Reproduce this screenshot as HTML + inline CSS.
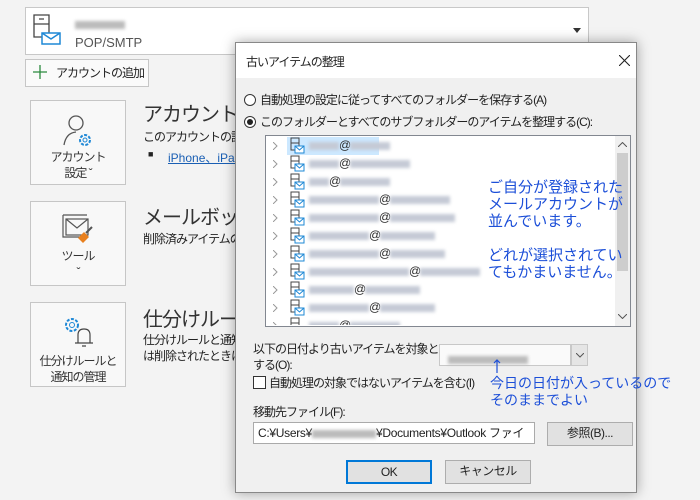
<!DOCTYPE html>
<html><head><meta charset="utf-8"><style>
*{margin:0;padding:0;box-sizing:border-box}
body{width:700px;height:500px;background:#f3f3f3;font-family:"Liberation Sans","Noto Sans CJK JP",sans-serif;position:relative;overflow:hidden;color:#222}
.a{position:absolute;white-space:nowrap}
.tile{position:absolute;left:30px;width:96px;height:85px;border:1px solid #c6c6c6;background:#f8f8f8;text-align:center;font-size:12px;line-height:16px;color:#333;letter-spacing:-1px}
.blur{display:inline-block;height:8px;background:#c5cad6;filter:blur(1.5px);vertical-align:middle}
.dlg{position:absolute;left:235px;top:42px;width:402px;height:451px;background:#f0f0f0;border:1px solid #888;box-shadow:0 0 12px rgba(0,0,0,.35)}
.dlg .a{letter-spacing:-1px}
.rad{position:absolute;width:12px;height:12px;border:1px solid #333;border-radius:50%;background:#fff}
.btn{position:absolute;border:1px solid #adadad;background:#e1e1e1;font-size:12px;text-align:center;line-height:21px;letter-spacing:-0.5px}
.blue{color:#1c4fd8;font-size:14px;line-height:17px}
.dlg .blue{letter-spacing:0}
.row{position:absolute;left:8px;height:18px;font-size:12px}
.sm{letter-spacing:-1px}
</style></head><body>
<div class="a" style="left:25px;top:7px;width:564px;height:48px;background:#fff;border:1px solid #c8c8c8"></div>
<svg class="a" style="left:33px;top:14px" width="30" height="32"><path d="M1 1h15v22H1zM1 10h15M6 5h5" fill="none" stroke="#444" stroke-width="1.3"/><rect x="9" y="19" width="18" height="11" fill="#fff" stroke="#1e88d6" stroke-width="1.5"/><path d="M9 19l9 6 9-6" fill="none" stroke="#1e88d6" stroke-width="1.5"/></svg>
<div class="a" style="left:75px;top:16px"><span class="blur" style="width:50px;background:#bbb"></span></div>
<div class="a" style="left:75px;top:35px;font-size:13px;color:#555">POP/SMTP</div>
<svg class="a" style="left:573px;top:28px" width="8" height="5"><path d="M0 0h8L4 5z" fill="#333"/></svg>
<div class="a sm" style="left:25px;top:59px;width:124px;height:28px;border:1px solid #c6c6c6;background:#fafafa;font-size:12px;line-height:26px;padding-left:30px">アカウントの追加</div>
<svg class="a" style="left:33px;top:65px" width="14" height="14"><path d="M7 0v14M0 7h14" stroke="#2b8a3e" stroke-width="1.3"/></svg>
<div class="tile" style="top:100px"><svg width="40" height="40" style="margin-top:10px"><circle cx="18" cy="12" r="7" fill="none" stroke="#555" stroke-width="1.3"/><path d="M6 34q2-12 12-13" fill="none" stroke="#555" stroke-width="1.3"/><circle cx="27" cy="29" r="5" fill="none" stroke="#1e88d6" stroke-width="2" stroke-dasharray="3 1.5"/><circle cx="27" cy="29" r="2" fill="none" stroke="#1e88d6"/></svg><div style="margin-top:-6px">アカウント<br>設定 ˇ</div></div>
<div class="tile" style="top:201px"><svg width="40" height="36" style="margin-top:10px"><path d="M5 3h24M5 3v22h20" fill="none" stroke="#555" stroke-width="1.2"/><rect x="8" y="7" width="22" height="16" fill="none" stroke="#555" stroke-width="1.2"/><path d="M8 7l11 9 11-9" fill="none" stroke="#555" stroke-width="1.2"/><path d="M20 26l6-6 5 5-6 6z" fill="#e8801e"/><path d="M28 21l6-6" stroke="#555" stroke-width="2"/></svg><div style="margin-top:-4px">ツール<br>ˇ</div></div>
<div class="tile" style="top:302px"><svg width="40" height="38" style="margin-top:10px"><circle cx="14" cy="12" r="6" fill="none" stroke="#1e88d6" stroke-width="2" stroke-dasharray="3 1.5"/><circle cx="14" cy="12" r="2.5" fill="none" stroke="#1e88d6"/><path d="M20 30v-8q0-6 6-6t6 6v8h3H17M24 33h4" fill="none" stroke="#444" stroke-width="1.2"/></svg><div style="margin-top:-2px">仕分けルールと<br>通知の管理</div></div>
<div class="a" style="left:143px;top:98px;font-size:20px;color:#333;letter-spacing:-1px">アカウントの設</div>
<div class="a sm" style="left:143px;top:128px;font-size:12px">このアカウントの設定</div>
<div class="a" style="left:148px;top:149px;font-size:9px">■</div>
<div class="a" style="left:168px;top:149px;font-size:12px;color:#1a5fb4;text-decoration:underline">iPhone、iPad</div>
<div class="a" style="left:143px;top:201px;font-size:20px;color:#333;letter-spacing:-1px">メールボックス</div>
<div class="a sm" style="left:143px;top:230px;font-size:12px">削除済みアイテムの</div>
<div class="a" style="left:143px;top:303px;font-size:20px;color:#333;letter-spacing:-1px">仕分けルール</div>
<div class="a sm" style="left:143px;top:332px;font-size:12px;line-height:16px">仕分けルールと通知<br>は削除されたときに更</div>

<div class="dlg">
<div class="a" style="left:0;top:0;width:400px;height:35px;background:#fff"></div>
<div class="a" style="left:10px;top:10px;font-size:12px">古いアイテムの整理</div>
<svg class="a" style="left:383px;top:12px" width="11" height="11"><path d="M0 0l11 11M11 0L0 11" stroke="#222" stroke-width="1.1"/></svg>
<div class="rad" style="left:8px;top:51px"></div>
<div class="a" style="left:24px;top:48px;font-size:12px">自動処理の設定に従ってすべてのフォルダーを保存する(A)</div>
<div class="rad" style="left:8px;top:73px"><div style="width:6px;height:6px;border-radius:50%;background:#222;margin:2px"></div></div>
<div class="a" style="left:24px;top:70px;font-size:12px">このフォルダーとすべてのサブフォルダーのアイテムを整理する(C):</div>
<div class="a" style="left:29px;top:92px;width:366px;height:192px;background:#fff;border:1px solid #828790;overflow:hidden">
<div class="a" style="left:349px;top:0;width:15px;height:190px;background:#f0f0f0"></div>
<div class="a" style="left:351px;top:17px;width:11px;height:118px;background:#cdcdcd"></div>
<svg class="a" style="left:352px;top:6px" width="9" height="5"><path d="M0 5l4.5-4.5L9 5" fill="none" stroke="#555"/></svg>
<svg class="a" style="left:352px;top:178px" width="9" height="5"><path d="M0 0l4.5 4.5L9 0" fill="none" stroke="#555"/></svg>
<div class="a" style="left:21px;top:1px;width:92px;height:18px;background:#cce8ff"></div>
</div>
<div id="rows" class="a" style="left:29px;top:92px;width:320px;height:190px;overflow:hidden">
</div>
<div class="a blue" style="left:252px;top:136px;font-size:15px">ご自分が登録された<br>メールアカウントが<br>並んでいます。<br><br>どれが選択されてい<br>てもかまいません。</div>
<div class="a" style="left:17px;top:298px;font-size:12px;line-height:16px">以下の日付より古いアイテムを対象と<br>する(O):</div>
<div class="a" style="left:203px;top:301px;width:132px;height:22px;background:#fafafa;border:1px solid #c8c8c8;padding:6px 8px"><span class="blur" style="width:80px;background:#bbb"></span></div>
<div class="a" style="left:335px;top:301px;width:17px;height:22px;background:#e5e5e5;border:1px solid #c8c8c8"></div>
<svg class="a" style="left:340px;top:310px" width="8" height="5"><path d="M0 0l4 4 4-4" fill="none" stroke="#555"/></svg>
<svg class="a" style="left:257px;top:316px" width="8" height="14"><path d="M4 14V1M1 4l3-3 3 3" fill="none" stroke="#1c4fd8" stroke-width="1.2"/></svg>
<div class="a blue" style="left:254px;top:332px;line-height:17px">今日の日付が入っているので<br>そのままでよい</div>
<div class="a" style="left:17px;top:333px;width:13px;height:13px;border:1px solid #333;background:#fff"></div>
<div class="a" style="left:33px;top:331px;font-size:12px">自動処理の対象ではないアイテムを含む(I)</div>
<div class="a" style="left:17px;top:360px;font-size:12px">移動先ファイル(F):</div>
<div class="a" style="left:17px;top:379px;width:282px;height:22px;background:#fff;border:1px solid #aaa;font-size:12px;line-height:20px;padding-left:4px;overflow:hidden;letter-spacing:-0.3px">C:¥Users¥<span class="blur" style="width:64px;background:#bbb"></span>¥Documents¥Outlook ファイ</div>
<div class="btn" style="left:311px;top:379px;width:86px;height:24px">参照(B)...</div>
<div class="btn" style="left:110px;top:417px;width:86px;height:24px;border:2px solid #0078d7;line-height:20px">OK</div>
<div class="btn" style="left:209px;top:417px;width:86px;height:24px">キャンセル</div>
</div>
<script>
var w=[[30,40],[30,60],[20,50],[70,60],[70,65],[60,55],[70,55],[100,60],[45,55],[60,55],[30,50]];
var h='';for(var i=0;i<11;i++){var t=2+i*18;
h+='<div class="row" style="top:'+t+'px"><svg style="position:absolute;left:0;top:5px" width="5" height="8"><path d="M0 0l4 4-4 4" fill="none" stroke="#999"/></svg>'+
'<svg style="position:absolute;left:16px;top:0" width="16" height="17"><path d="M2 1h8v12H2zM2 6h8" fill="none" stroke="#444"/><rect x="6" y="9" width="9" height="7" fill="#fff" stroke="#1e88d6"/><path d="M6 9l4.5 4 4.5-4" fill="none" stroke="#1e88d6"/></svg>'+
'<span style="position:absolute;left:36px;top:1px"><span class="blur" style="width:'+w[i][0]+'px"></span>@<span class="blur" style="width:'+w[i][1]+'px"></span></span></div>';}
document.getElementById('rows').innerHTML=h;
</script>
</body></html>
